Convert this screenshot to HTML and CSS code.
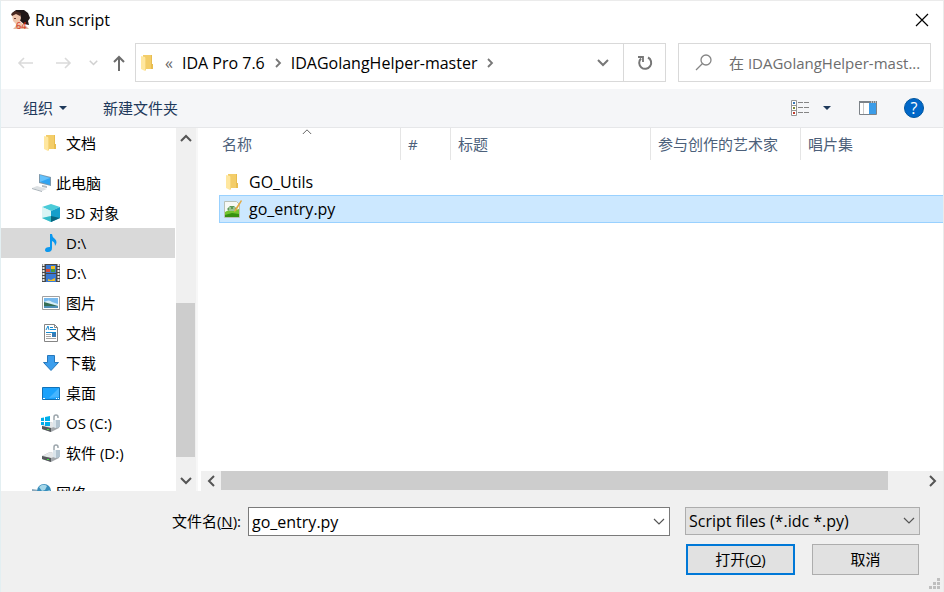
FILE: index.html
```html
<!DOCTYPE html>
<html lang="zh-CN">
<head>
<meta charset="utf-8">
<title>Run script</title>
<link rel="stylesheet" href="styles.css">
</head>
<body>
<svg class="defs" aria-hidden="true">
  <symbol id="folder" viewBox="0 0 18 18">
    <path d="M4 1h9v14H4z" fill="#f3cd69"/><path d="M12 1h1v9h1v5h-2z" fill="#e8bd50"/><path d="M2 2l4 1v14l-4-2z" fill="#ffe79f"/><path d="M6 3v14l1-1V4z" fill="#f7d77c"/>
  </symbol>
  <symbol id="chev-right" viewBox="0 0 8 10"><path d="M2 1l4 4-4 4" fill="none" stroke="currentColor" stroke-width="1.8"/></symbol>
  <symbol id="chev-down" viewBox="0 0 12 8"><path d="M1 1l5 5 5-5" fill="none" stroke="currentColor" stroke-width="2"/></symbol>
  <symbol id="chev-thin" viewBox="0 0 12 8"><path d="M1 1l5 5 5-5" fill="none" stroke="currentColor" stroke-width="1.2"/></symbol>
  <symbol id="caret" viewBox="0 0 8 4"><path d="M0 0h8L4 4z" fill="currentColor"/></symbol>
  <symbol id="drive" viewBox="0 0 20 18">
    <path d="M1 12l8-4 9 3v3l-8 4-9-3z" fill="#a3a7ab"/><path d="M1 12l8-4 9 3-8 3z" fill="#e5e7e9"/><path d="M1 12l9 2v4l-9-3z" fill="#55595c"/><path d="M6 15h2v1H6z" fill="#3ee03a"/>
    <path d="M13 6V3q0-2 2-2t2 2v1" fill="none" stroke="#9da6ac" stroke-width="1.5"/><path d="M12 6h7v7l-3 1-4-1z" fill="#b3c4d0"/><path d="M12 6h3v8l-3-1z" fill="#dbe5eb"/>
  </symbol>
</svg>
<div class="window">
  <header class="titlebar">
    <svg class="app-icon" viewBox="0 0 20 20" aria-hidden="true">
      <path d="M2 3l4-3h8l4 3 2 5-2 3 1 4-5-1-6-5z" fill="#211718"/><path d="M2 4l4-2 4 2 1 4-1 3 3 3 1 5H5l1-5-3-3z" fill="#f0c5ac"/><path d="M1 4l4-3 6 2-1 3-4-2-4 2z" fill="#4a2921"/><path d="M4 8h2v1H4z" fill="#6b3a30"/><path d="M3 19l4-4 9 1 3 3z" fill="#e3b79d"/>
      <text class="app-num" x="6" y="19">64</text>
    </svg>
    <h1>Run script</h1>
    <button class="plain close" aria-label="关闭"><svg viewBox="0 0 14 14"><path d="M1 1l12 12M13 1L1 13" fill="none" stroke="#000" stroke-width="1.2"/></svg></button>
  </header>

  <nav class="navbar" aria-label="导航">
    <div class="history">
      <button class="plain" aria-label="后退" disabled><svg class="arrow" viewBox="0 0 16 16"><path d="M16 8H2M7 3L2 8l5 5" fill="none" stroke="#dadada" stroke-width="1.6"/></svg></button>
      <button class="plain" aria-label="前进" disabled><svg class="arrow" viewBox="0 0 16 16"><path d="M0 8h14M9 3l5 5-5 5" fill="none" stroke="#dadada" stroke-width="1.6"/></svg></button>
      <button class="plain recent" aria-label="最近位置" disabled><svg class="chev-small"><use href="#chev-down"/></svg></button>
      <button class="plain up" aria-label="上移"><svg class="arrow" viewBox="0 0 16 16"><path d="M8 16V2M3 7l5-5 5 5" fill="none" stroke="#6c6c6c" stroke-width="2"/></svg></button>
    </div>
    <div class="address">
      <svg class="icon"><use href="#folder"/></svg>
      <span class="more">«</span>
      <a href="#ida">IDA Pro 7.6</a>
      <svg class="crumb-sep"><use href="#chev-right"/></svg>
      <a href="#helper">IDAGolangHelper-master</a>
      <svg class="crumb-sep"><use href="#chev-right"/></svg>
      <button class="plain addr-drop" aria-label="以前的位置"><svg class="chev"><use href="#chev-down"/></svg></button>
      <button class="plain refresh" aria-label="刷新"><svg viewBox="0 0 18 18"><path d="M12 3.500A6 6 0 1 1 5 4.500" fill="none" stroke="#767676" stroke-width="2"/><path d="M2 3h5v5" fill="none" stroke="#767676" stroke-width="1.800"/></svg></button>
    </div>
    <label class="search">
      <svg viewBox="0 0 18 18" aria-hidden="true"><circle cx="11" cy="6" r="5" fill="none" stroke="#858585" stroke-width="1.3"/><path d="M7.500 9.500L1 16" stroke="#858585" stroke-width="1.3"/></svg>
      <input type="text" placeholder="在 IDAGolangHelper-mast..." aria-label="搜索">
    </label>
  </nav>

  <div class="toolbar">
    <button class="plain organize">组织 <svg class="caret"><use href="#caret"/></svg></button>
    <button class="plain">新建文件夹</button>
    <button class="plain view" aria-label="更改视图">
      <svg class="view-icon" viewBox="0 0 19 16"><path d="M.5.5h5v15h-5zM.5 5.500h5M.5 10.500h5" fill="#fff" stroke="#969696"/><path d="M2 2h2v2H2z" fill="#3a78b5"/><path d="M2 7h2v2H2z" fill="#7d8a35"/><path d="M2 12h2v2H2z" fill="#c23b2b"/><path d="M7 2.500h5m1 0h5M7 7.500h5m1 0h5M7 12.500h5m1 0h5" stroke="#858585"/></svg>
      <svg class="caret"><use href="#caret"/></svg>
    </button>
    <button class="plain pane" aria-label="预览窗格"><svg viewBox="0 0 18 14"><path d="M.5.5h17v13H.5z" fill="#fff" stroke="#7c8288"/><path d="M0 0h18v2H0z" fill="#7c8288"/><path d="M4.500 2v11" stroke="#c9c9c9"/><path d="M10 2h7v11h-7z" fill="#3b9ce8"/><path d="M12 1h1m1 0h1m1 0h1" stroke="#fff"/></svg></button>
    <button class="help" aria-label="帮助">?</button>
  </div>

  <main class="content">
    <aside class="tree">
      <ul>
        <li><svg class="icon"><use href="#folder"/></svg><span>文档</span></li>
        <li class="root"><svg class="icon" viewBox="0 0 20 20"><path d="M7 1l12 3v9L7 10z" fill="#7f99ac"/><path d="M8 2l10 3v7L8 9z" fill="#2fa4f2"/><path d="M8 2l10 3-10 4z" fill="#64c1fb"/><path d="M10 12l5 1v2l-5-1z" fill="#b2bcc3"/><path d="M0 15l5-2 10 3-5 2z" fill="#dde1e4"/><path d="M0 15l10 3v1L0 16z" fill="#a8b1b8"/></svg><span>此电脑</span></li>
        <li><svg class="icon" viewBox="0 0 18 18"><path d="M9 0l9 3-9 4-9-4z" fill="#4bcbd8"/><path d="M0 3l9 4v11l-9-4z" fill="#9ee6ec"/><path d="M0 3l9 4v5l-9 2z" fill="#d9f5f5"/><path d="M18 3L9 7v11l9-4z" fill="#159fca"/><path d="M9 12l9 2-9 4z" fill="#08657e"/><path d="M9 12v6l-9-4z" fill="#35bdca"/></svg><span>3D 对象</span></li>
        <li class="current"><svg class="icon" viewBox="0 0 18 18"><path d="M8 0h2q0 3 3 5 3 3 0 7 0-4-3-5v7q0 4-4 4-3 0-3-2 0-3 5-3z" fill="#0b98ee"/></svg><span>D:\</span></li>
        <li><svg class="icon" viewBox="0 0 18 18"><path d="M0 0h18v18H0z" fill="#484848"/><path d="M1.500 0v18M16.500 0v18" stroke="#e9e9e9" stroke-width="2" stroke-dasharray="2 1"/><path d="M4 1h10v8H4zM4 10h10v8H4z" fill="#3979d4"/><path d="M4 5h4v3H4z" fill="#d44a38"/><path d="M9 2h4v3H9z" fill="#f1bd22"/><path d="M9 5h4v3H9z" fill="#489a3b"/><path d="M6 15l3 1 4-2v3H6z" fill="#f1bd22"/></svg><span>D:\</span></li>
        <li><svg class="icon" viewBox="0 0 18 18"><path d="M.5 2.500h17v13H.5z" fill="#fff" stroke="#a0a0a0"/><path d="M2 4h14v10H2z" fill="#77b9ed"/><path d="M2 8q5-3 8 0l6 2v2H2z" fill="#d7edf6"/><path d="M2 8l7 2 7 2v1H2z" fill="#356e55"/><path d="M2 12h14v2H2z" fill="#4f8fb6"/></svg><span>图片</span></li>
        <li><svg class="icon" viewBox="0 0 18 18"><path d="M2.500.5h10l3 3v14h-13z" fill="#fff" stroke="#858585"/><path d="M12.500.5v3h3" fill="none" stroke="#858585"/><path d="M4 6l2-4 1 4M8 3.500h3M8 5.500h6M4 8.500h10" fill="none" stroke="#168bd2"/><path d="M4 10.500h5M4 12.500h5M4 14.500h10" stroke="#a4a4a4"/><path d="M10 9h4v4h-4z" fill="#367bb5"/></svg><span>文档</span></li>
        <li><svg class="icon" viewBox="0 0 18 18"><path d="M5.500 1.500h7v7h4L9 16.500l-7.500-8h4z" fill="#3c9eed" stroke="#2678bc"/></svg><span>下载</span></li>
        <li><svg class="icon" viewBox="0 0 18 18"><path d="M.5 3.500h17v12H.5z" fill="#1ba2fc" stroke="#1172b8"/><path d="M17 4v9L7 14z" fill="#46b5ff"/><path d="M1 14.500h2m11 0h1m1 0h1" stroke="#fff"/></svg><span>桌面</span></li>
        <li class="disk"><svg class="icon" viewBox="0 0 20 18"><use href="#drive"/><path d="M0 4l3-.5V7H0zM4 3l5-1v5H4zM0 8h3v3H0zM4 8h5v4H4z" fill="#00aeea"/></svg><span>OS (C:)</span></li>
        <li class="disk"><svg class="icon"><use href="#drive"/></svg><span>软件 (D:)</span></li>
        <li class="root"><svg class="icon" viewBox="0 0 20 20"><path d="M0 6l7 1v7l-7-2z" fill="#8ba8bb"/><circle cx="12" cy="8" r="7" fill="#378dbb"/><path d="M7 4q4-4 8-1l-2 4-3 1zM15 8l3-1-2 5z" fill="#a5d7e9"/></svg><span>网络</span></li>
      </ul>
    </aside>
    <div class="vscroll">
      <button class="plain" aria-label="向上滚动"><svg class="chev flip"><use href="#chev-down"/></svg></button>
      <div class="vtrack"><div class="vthumb"></div></div>
      <button class="plain" aria-label="向下滚动"><svg class="chev"><use href="#chev-down"/></svg></button>
    </div>
    <section class="files">
      <table>
        <colgroup><col class="c-name"><col class="c-num"><col class="c-title"><col class="c-artist"><col></colgroup>
        <thead><tr><th>名称<svg class="sort"><use href="#chev-thin"/></svg></th><th>#</th><th>标题</th><th>参与创作的艺术家</th><th>唱片集</th></tr></thead>
        <tbody>
          <tr><td colspan="5"><div class="file"><svg class="icon"><use href="#folder"/></svg>GO_Utils</div></td></tr>
          <tr class="selected"><td colspan="5"><div class="file"><svg class="icon" viewBox="0 0 18 18"><path d="M.5 1.500h12l3 3v13H.5z" fill="#f7f9f5" stroke="#b9c1b7"/><path d="M1 12q4-3 7-1l7-2v8H1z" fill="#73c42f"/><path d="M1 15l7-2 7 1v3H1z" fill="#36910f"/><path d="M3 9l3-3h4l3 3-2 2H5z" fill="#5d9a55"/><path d="M5 8h2m2 0h2M5 10h6" stroke="#d8ead1"/><path d="M17 0l1 1-6 10-2 1 1-3z" fill="#e3a842"/></svg>go_entry.py</div></td></tr>
        </tbody>
      </table>
      <div class="hscroll">
        <button class="plain" aria-label="向左滚动"><svg class="chev left"><use href="#chev-down"/></svg></button>
        <div class="htrack"><div class="hthumb"></div></div>
        <button class="plain" aria-label="向右滚动"><svg class="chev right"><use href="#chev-down"/></svg></button>
      </div>
    </section>
  </main>

  <form class="footer">
    <label class="name-label" for="filename">文件名(<u>N</u>):</label>
    <div class="combo"><input id="filename" type="text" value="go_entry.py"><button type="button" class="plain" aria-label="历史文件名"><svg class="chev"><use href="#chev-thin"/></svg></button></div>
    <div class="filter"><select aria-label="文件类型"><option>Script files (*.idc *.py)</option></select><svg class="chev"><use href="#chev-thin"/></svg></div>
    <div class="actions">
      <button type="button" class="btn primary"><span>打开(<u>O</u>)</span></button>
      <button type="button" class="btn">取消</button>
    </div>
    <svg class="grip" viewBox="0 0 12 12" aria-hidden="true"><path d="M8 0h3v3H8zM4 4h3v3H4zM8 4h3v3H8zM0 8h3v3H0zM4 8h3v3H4zM8 8h3v3H8z" fill="#bfbfbf"/></svg>
  </form>
</div>
</body>
</html>
```
FILE: styles.css
```css
* { box-sizing: border-box; }
body {
  margin: 0;
  font: 15px/20px "Open Sans", "Noto Sans CJK SC", sans-serif;
  color: #000;
  background: #fff;
}
button, input, select { font: inherit; color: inherit; margin: 0; }
svg { display: block; flex: none; }
.defs { position: absolute; width: 0; height: 0; }
.plain {
  display: flex;
  align-items: center;
  justify-content: center;
  padding: 0;
  border: 0;
  background: none;
}
.icon { width: 18px; height: 18px; }
.chev { width: 12px; height: 8px; }
.window {
  display: flex;
  flex-direction: column;
  height: 100vh;
  overflow: hidden;
  border-top: 1px solid #ebebeb;
  border-left: 1px solid #e3eff2;
  border-right: 1px solid #ebebeb;
}

/* Title bar */
.titlebar { display: flex; align-items: center; height: 38px; padding: 0 14px 0 9px; gap: 5px; }
.app-icon { width: 20px; height: 20px; }
.app-num { font: 9px "Open Sans", sans-serif; fill: #d42a10; }
h1 { margin: 0; font-size: 16px; font-weight: 400; line-height: 18px; }
.close { margin-left: auto; }
.close svg { width: 14px; height: 14px; }

/* Navigation */
.navbar { display: flex; align-items: center; padding: 4px 12px 7px 16px; }
.history { display: flex; align-items: center; width: 118px; }
.arrow { width: 16px; height: 16px; }
.history .plain + .plain { margin-left: 23px; }
.history .recent.plain { margin-left: 17px; }
.history .up.plain { margin-left: 13px; }
.chev-small { width: 9px; height: 6px; color: #d0d0d0; }
.address {
  display: flex;
  flex: 1;
  align-items: center;
  height: 39px;
  min-width: 0;
  padding-left: 3px;
  border: 1px solid #d9d9d9;
  font-size: 16px;
  white-space: nowrap;
}
.address a { color: #000; text-decoration: none; }
.more { margin: 0 9px 0 8px; color: #666; }
.crumb-sep { width: 8px; height: 10px; margin: 0 9px; color: #777; }
.addr-drop { width: 40px; margin-left: auto; color: #777; }
.refresh { width: 42px; height: 37px; border-left: 1px solid #d9d9d9; }
.refresh svg { width: 18px; height: 18px; }
.search {
  display: flex;
  flex: 0 1 253px;
  align-items: center;
  height: 39px;
  margin-left: 12px;
  padding-left: 16px;
  gap: 16px;
  border: 1px solid #d9d9d9;
}
.search svg { width: 18px; height: 18px; }
.search input {
  flex: 1;
  min-width: 0;
  padding: 0;
  border: 0;
  outline: 0;
  background: none;
  text-overflow: ellipsis;
}
.search input::placeholder { color: #6d6d6d; opacity: 1; }

/* Toolbar */
.toolbar {
  display: flex;
  align-items: center;
  height: 39px;
  padding: 0 19px 0 22px;
  background: #f5f6f8;
  border-bottom: 1px solid #e6e7e9;
  color: #1e395b;
}
.caret { width: 8px; height: 4px; }
.organize { gap: 6px; margin-right: 36px; }
.view { margin-left: auto; gap: 13px; }
.view-icon { width: 19px; height: 16px; }
.pane { margin: 0 27px 0 28px; }
.pane svg { width: 18px; height: 14px; }
.help {
  width: 20px;
  height: 20px;
  padding: 0;
  border: 1px solid #00569f;
  border-radius: 50%;
  background: #0067c8;
  color: #fff;
  font-size: 16px;
  line-height: 18px;
  text-align: center;
}

/* Folder tree */
.content { display: flex; flex: 1; min-height: 0; }
.tree { width: 174px; overflow: hidden; }
.tree ul { margin: 0; padding: 0; list-style: none; }
.tree li { display: flex; align-items: center; height: 30px; padding-left: 41px; gap: 6px; white-space: nowrap; }
.tree .root { margin-top: 10px; padding-left: 31px; gap: 4px; }
.tree .root .icon { width: 20px; height: 20px; }
.tree .disk { padding-left: 40px; gap: 5px; }
.tree .disk .icon { width: 20px; }
.tree .current { background: #d9d9d9; }
.vscroll { display: flex; flex-direction: column; width: 20px; margin-left: 1px; background: #f0f0f0; color: #555; }
.vscroll button { height: 20px; }
.vtrack { display: flex; flex: 1; flex-direction: column; justify-content: flex-end; padding-bottom: 14px; }
.vthumb { height: 50%; width: 19px; background: #cdcdcd; }
.flip { transform: rotate(180deg); }
.left { transform: rotate(90deg); }
.right { transform: rotate(-90deg); }

/* File list */
.files { display: flex; flex: 1; flex-direction: column; min-width: 0; border-left: 2px solid #f7f7f7; }
table { width: calc(100% - 21px); margin-left: 21px; border-collapse: separate; border-spacing: 0; table-layout: fixed; }
.c-name { width: 181px; }
.c-num { width: 50px; }
.c-title { width: 200px; }
.c-artist { width: 150px; }
th {
  position: relative;
  height: 32px;
  padding: 0 0 0 7px;
  border-left: 1px solid #e5e5e5;
  color: #4c607a;
  font-weight: 400;
  text-align: left;
  white-space: nowrap;
}
th:first-child { border-left: 0; padding-left: 3px; }
.sort { position: absolute; top: 0; left: 83px; width: 10px; height: 7px; color: #666; transform: rotate(180deg); }
tbody::before { content: ""; display: block; height: 8px; }
td { height: 27px; padding: 0; font-size: 16px; }
.file { display: flex; align-items: center; height: 27px; padding-left: 5px; gap: 7px; }
.selected .file { height: 28px; padding-left: 4px; border: 1px solid #99d1ff; border-right: 0; background: #cce8ff; }
.hscroll { display: flex; height: 20px; margin: auto 0 0 3px; background: #f0f0f0; color: #555; }
.hscroll button { width: 20px; }
.htrack { flex: 1; }
.hthumb { width: 95%; height: 19px; background: #cdcdcd; }

/* Footer */
.footer {
  position: relative;
  display: grid;
  grid-template-columns: 240px 1fr 235px;
  column-gap: 7px;
  row-gap: 8px;
  height: 101px;
  padding: 16px 23px 0 0;
  align-content: start;
  background: #f0f0f0;
}
.name-label { justify-self: end; line-height: 28px; }
.combo { display: flex; height: 29px; border: 1px solid #7a7a7a; background: #fff; margin-right: 8px; font-size: 16px; }
.combo input { flex: 1; min-width: 0; padding: 0 3px; border: 0; outline: 0; background: none; }
.combo button { width: 20px; color: #555; }
.filter { position: relative; }
.filter select {
  width: 100%;
  height: 28px;
  padding: 0 24px 0 3px;
  border: 1px solid #adadad;
  border-radius: 0;
  background: #e1e1e1;
  font-size: 16px;
  appearance: none;
}
.filter .chev { position: absolute; top: 10px; right: 5px; color: #555; }
.actions { grid-column: 3; display: flex; gap: 17px; padding: 0 1px; }
.btn { flex: 1; height: 31px; padding: 0 0 2px; border: 1px solid #adadad; background: #e1e1e1; }
.primary { border: 2px solid #0078d7; }
.grip { position: absolute; right: 2px; bottom: 2px; width: 12px; height: 12px; }
```
